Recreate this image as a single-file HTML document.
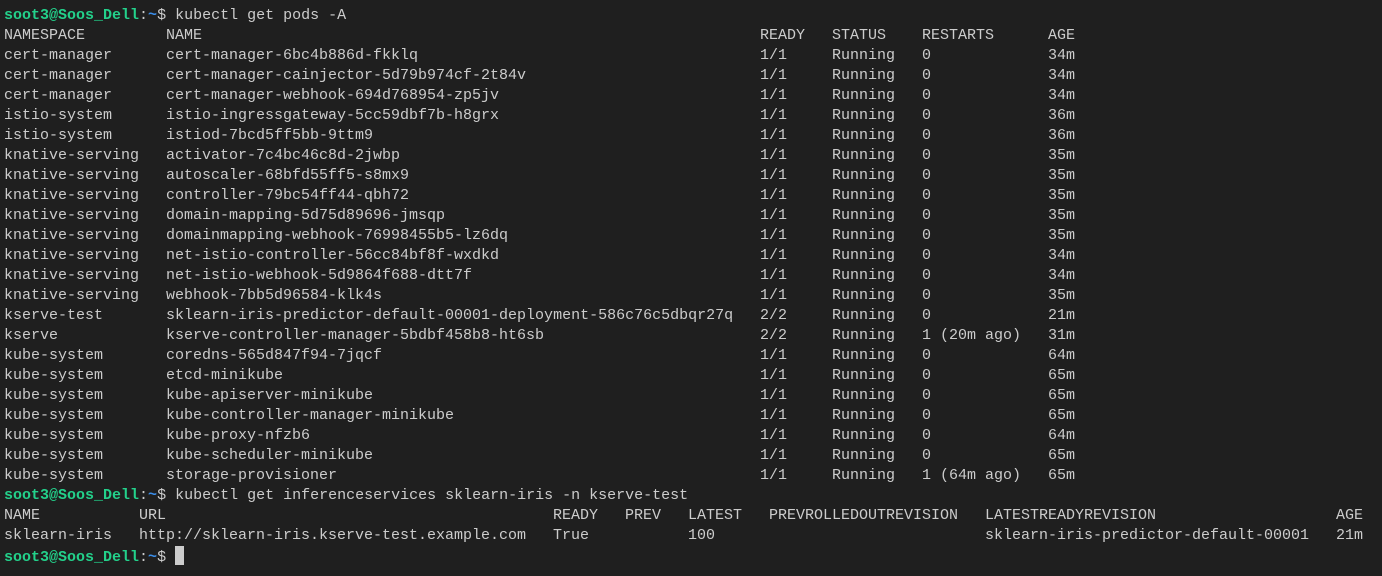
<!DOCTYPE html>
<html><head><meta charset="utf-8"><style>
html,body{margin:0;padding:0;background:#1f1f1f;width:1382px;height:576px;overflow:hidden}
.t{position:absolute;left:4px;top:6px;font-family:"Liberation Mono",monospace;font-size:15px;line-height:20px;color:#cccccc}
.l{height:20px;white-space:pre}
.l span{display:inline-block}
.g{color:#23d18b;font-weight:bold}
.b{color:#3b8eea;font-weight:bold}
.a span:nth-child(1){width:162px}.a span:nth-child(2){width:594px}.a span:nth-child(3){width:72px}.a span:nth-child(4){width:90px}.a span:nth-child(5){width:126px}
.i span:nth-child(1){width:135px}.i span:nth-child(2){width:414px}.i span:nth-child(3){width:72px}.i span:nth-child(4){width:63px}.i span:nth-child(5){width:81px}.i span:nth-child(6){width:216px}.i span:nth-child(7){width:351px}
.cur{display:inline-block;width:9px;height:19px;background:#cccccc;vertical-align:-4px}
</style></head><body><div class="t"><div class="l"><span class="g">soot3@Soos_Dell</span>:<span class="b">~</span>$ kubectl get pods -A</div><div class="l a"><span>NAMESPACE</span><span>NAME</span><span>READY</span><span>STATUS</span><span>RESTARTS</span><span>AGE</span></div><div class="l a"><span>cert-manager</span><span>cert-manager-6bc4b886d-fkklq</span><span>1/1</span><span>Running</span><span>0</span><span>34m</span></div><div class="l a"><span>cert-manager</span><span>cert-manager-cainjector-5d79b974cf-2t84v</span><span>1/1</span><span>Running</span><span>0</span><span>34m</span></div><div class="l a"><span>cert-manager</span><span>cert-manager-webhook-694d768954-zp5jv</span><span>1/1</span><span>Running</span><span>0</span><span>34m</span></div><div class="l a"><span>istio-system</span><span>istio-ingressgateway-5cc59dbf7b-h8grx</span><span>1/1</span><span>Running</span><span>0</span><span>36m</span></div><div class="l a"><span>istio-system</span><span>istiod-7bcd5ff5bb-9ttm9</span><span>1/1</span><span>Running</span><span>0</span><span>36m</span></div><div class="l a"><span>knative-serving</span><span>activator-7c4bc46c8d-2jwbp</span><span>1/1</span><span>Running</span><span>0</span><span>35m</span></div><div class="l a"><span>knative-serving</span><span>autoscaler-68bfd55ff5-s8mx9</span><span>1/1</span><span>Running</span><span>0</span><span>35m</span></div><div class="l a"><span>knative-serving</span><span>controller-79bc54ff44-qbh72</span><span>1/1</span><span>Running</span><span>0</span><span>35m</span></div><div class="l a"><span>knative-serving</span><span>domain-mapping-5d75d89696-jmsqp</span><span>1/1</span><span>Running</span><span>0</span><span>35m</span></div><div class="l a"><span>knative-serving</span><span>domainmapping-webhook-76998455b5-lz6dq</span><span>1/1</span><span>Running</span><span>0</span><span>35m</span></div><div class="l a"><span>knative-serving</span><span>net-istio-controller-56cc84bf8f-wxdkd</span><span>1/1</span><span>Running</span><span>0</span><span>34m</span></div><div class="l a"><span>knative-serving</span><span>net-istio-webhook-5d9864f688-dtt7f</span><span>1/1</span><span>Running</span><span>0</span><span>34m</span></div><div class="l a"><span>knative-serving</span><span>webhook-7bb5d96584-klk4s</span><span>1/1</span><span>Running</span><span>0</span><span>35m</span></div><div class="l a"><span>kserve-test</span><span>sklearn-iris-predictor-default-00001-deployment-586c76c5dbqr27q</span><span>2/2</span><span>Running</span><span>0</span><span>21m</span></div><div class="l a"><span>kserve</span><span>kserve-controller-manager-5bdbf458b8-ht6sb</span><span>2/2</span><span>Running</span><span>1 (20m ago)</span><span>31m</span></div><div class="l a"><span>kube-system</span><span>coredns-565d847f94-7jqcf</span><span>1/1</span><span>Running</span><span>0</span><span>64m</span></div><div class="l a"><span>kube-system</span><span>etcd-minikube</span><span>1/1</span><span>Running</span><span>0</span><span>65m</span></div><div class="l a"><span>kube-system</span><span>kube-apiserver-minikube</span><span>1/1</span><span>Running</span><span>0</span><span>65m</span></div><div class="l a"><span>kube-system</span><span>kube-controller-manager-minikube</span><span>1/1</span><span>Running</span><span>0</span><span>65m</span></div><div class="l a"><span>kube-system</span><span>kube-proxy-nfzb6</span><span>1/1</span><span>Running</span><span>0</span><span>64m</span></div><div class="l a"><span>kube-system</span><span>kube-scheduler-minikube</span><span>1/1</span><span>Running</span><span>0</span><span>65m</span></div><div class="l a"><span>kube-system</span><span>storage-provisioner</span><span>1/1</span><span>Running</span><span>1 (64m ago)</span><span>65m</span></div><div class="l"><span class="g">soot3@Soos_Dell</span>:<span class="b">~</span>$ kubectl get inferenceservices sklearn-iris -n kserve-test</div><div class="l i"><span>NAME</span><span>URL</span><span>READY</span><span>PREV</span><span>LATEST</span><span>PREVROLLEDOUTREVISION</span><span>LATESTREADYREVISION</span><span>AGE</span></div><div class="l i"><span>sklearn-iris</span><span>http://sklearn-iris.kserve-test.example.com</span><span>True</span><span></span><span>100</span><span></span><span>sklearn-iris-predictor-default-00001</span><span>21m</span></div><div class="l"><span class="g">soot3@Soos_Dell</span>:<span class="b">~</span>$ <span class="cur"></span></div></div></body></html>
